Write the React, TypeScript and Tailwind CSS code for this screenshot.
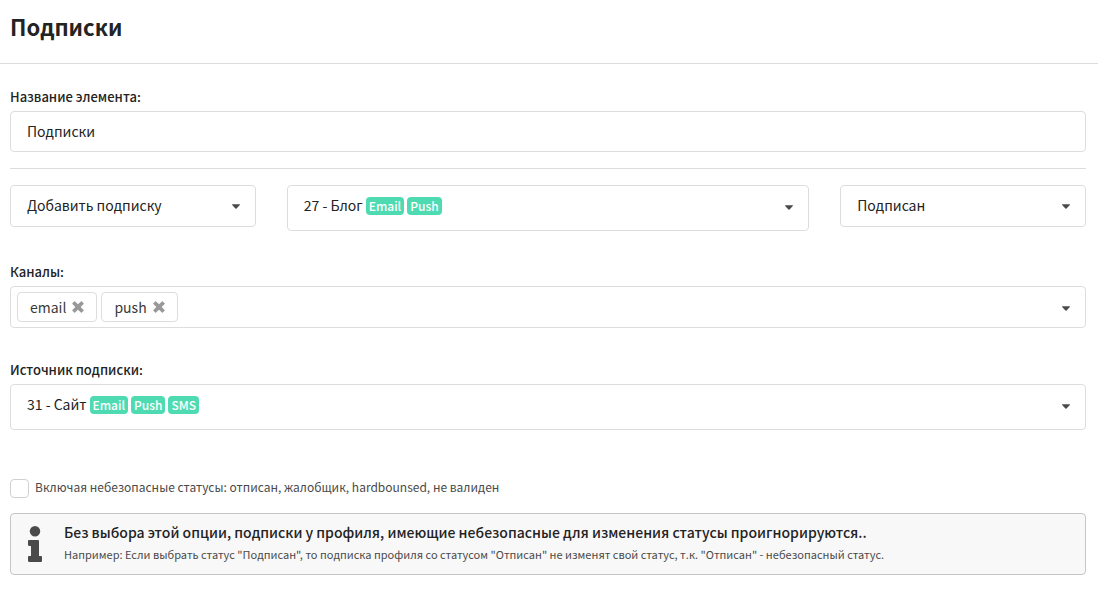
import { useId, useState } from 'react';
import type { ReactNode } from 'react';

const FIELD = 'w-full rounded border border-[#dcdddd] bg-white text-left text-[#232323]';

function Caret() {
  return (
    <svg viewBox="0 0 10 6" className="h-[5px] w-2 shrink-0 fill-[#4a4a4a]" aria-hidden="true">
      <path d="M0.6 0.2h8.8c.5 0 .7.5.4.9L5.7 5.6c-.4.4-1 .4-1.4 0L.2 1.1C-.1.7.1.2.6.2z" />
    </svg>
  );
}

function Badge({ children }: { children: ReactNode }) {
  return (
    <span className="rounded bg-[#4fdbb1] px-[3px] text-xs leading-[18px] font-medium text-white">
      {children}
    </span>
  );
}

function PlainSelect({ label, options }: { label: string; options: string[] }) {
  return (
    <div className="relative">
      <select
        aria-label={label}
        className={`${FIELD} block h-[42px] appearance-none pr-10 pb-[2px] pl-4 text-sm leading-5`}
      >
        {options.map((option) => (
          <option key={option}>{option}</option>
        ))}
      </select>
      <span className="pointer-events-none absolute inset-y-0 right-4 flex items-center">
        <Caret />
      </span>
    </div>
  );
}

function BadgeSelect({ id, label, value, badges }: { id?: string; label: string; value: string; badges: string[] }) {
  return (
    <button
      id={id}
      type="button"
      aria-label={label}
      aria-haspopup="listbox"
      className={`${FIELD} flex h-[46px] items-center justify-between pr-[15px] pb-[2px] pl-4 text-sm leading-5`}
    >
      <span className="flex items-center gap-[3px] pb-[2px]">
        <span className="pb-[2px]">{value}</span>
        {badges.map((badge) => (
          <Badge key={badge}>{badge}</Badge>
        ))}
      </span>
      <Caret />
    </button>
  );
}

function Label({ htmlFor, children }: { htmlFor: string; children: ReactNode }) {
  return (
    <label htmlFor={htmlFor} className="mb-1 block text-[13px] leading-5 font-medium text-[#232323]">
      {children}
    </label>
  );
}

export default function App() {
  const id = useId();
  const [name, setName] = useState('Подписки');
  const [channels, setChannels] = useState(['email', 'push']);
  const [unsafe, setUnsafe] = useState(false);

  return (
    <div className="bg-white font-['Noto_Sans_CJK_SC',sans-serif] text-[#232323]">
      <header className="border-b border-[#dcdddd] pt-[10px] pr-3 pb-[21px] pl-[10px]">
        <h1 className="text-[22px] leading-8 font-bold">Подписки</h1>
      </header>

      <main className="pt-[23px] pr-3 pb-4 pl-[10px]">
        <Label htmlFor={`${id}-name`}>Название элемента:</Label>
        <input
          id={`${id}-name`}
          value={name}
          onChange={(event) => setName(event.target.value)}
          className={`${FIELD} block h-[41px] px-4 pb-[2px] text-sm leading-5`}
        />

        <hr className="my-4 border-[#dcdddd]" />

        <div className="grid grid-cols-4 items-start gap-[31px]">
          <PlainSelect label="Действие" options={['Добавить подписку', 'Удалить подписку']} />
          <div className="col-span-2">
            <BadgeSelect label="Подписка" value="27 - Блог" badges={['Email', 'Push']} />
          </div>
          <PlainSelect label="Статус" options={['Подписан', 'Отписан']} />
        </div>

        <div className="mt-[31px]">
          <Label htmlFor={`${id}-channels`}>Каналы:</Label>
          <div className={`${FIELD} flex h-[42px] items-center gap-1 pr-[15px] pl-[6px]`}>
            {channels.map((channel) => (
              <span
                key={channel}
                className="flex h-[30px] items-center gap-[6px] rounded border border-[#dcdddd] px-3 text-sm leading-5 text-[#3a3a3a]"
              >
                {channel}
                <button
                  type="button"
                  aria-label={`Удалить ${channel}`}
                  onClick={() => setChannels(channels.filter((item) => item !== channel))}
                >
                  <svg viewBox="0 0 12 12" className="size-3 fill-[#999999]" aria-hidden="true">
                    <path d="M3.1.4 6 3.3 8.9.4c.3-.3.6-.3.9 0l1.8 1.8c.3.3.3.6 0 .9L8.7 6l2.9 2.9c.3.3.3.6 0 .9l-1.8 1.8c-.3.3-.6.3-.9 0L6 8.7l-2.9 2.9c-.3.3-.6.3-.9 0L.4 9.8c-.3-.3-.3-.6 0-.9L3.3 6 .4 3.1c-.3-.3-.3-.6 0-.9L2.2.4c.3-.3.6-.3.9 0z" />
                  </svg>
                </button>
              </span>
            ))}
            <button
              id={`${id}-channels`}
              type="button"
              aria-label="Каналы"
              aria-haspopup="listbox"
              className="flex h-full flex-1 items-center justify-end pt-[2px]"
            >
              <Caret />
            </button>
          </div>
        </div>

        <div className="mt-8">
          <Label htmlFor={`${id}-source`}>Источник подписки:</Label>
          <BadgeSelect
            id={`${id}-source`}
            label="Источник подписки"
            value="31 - Сайт"
            badges={['Email', 'Push', 'SMS']}
          />
        </div>

        <label className="mt-[49px] flex items-start gap-[6px] text-xs leading-4 text-[#4a4a4a]">
          <input
            type="checkbox"
            checked={unsafe}
            onChange={(event) => setUnsafe(event.target.checked)}
            className="size-[19px] shrink-0 appearance-none rounded border border-[#d0d1d1] bg-white checked:bg-[#4fdbb1]"
          />
          Включая небезопасные статусы: отписан, жалобщик, hardbounsed, не валиден
        </label>

        <section className="mt-[15px] flex items-center gap-[22px] rounded border border-[#c4c5c5] bg-[#f8f8f8] py-2 pr-4 pl-[17px]">
          <svg viewBox="0 0 14 36" className="h-9 w-[14px] shrink-0 fill-[#4a4a4a]" aria-hidden="true">
            <circle cx="7" cy="5.2" r="5.2" />
            <path d="M1.2 14h8.6c.8 0 1.2.5 1.2 1.2V30h1.8c.8 0 1.2.5 1.2 1.2v3.6c0 .8-.5 1.2-1.2 1.2H1.2C.4 36 0 35.5 0 34.8v-3.6C0 30.4.4 30 1.2 30H3V20H1.2C.4 20 0 19.5 0 18.8v-3.6C0 14.4.4 14 1.2 14z" />
          </svg>
          <div className="flex flex-col gap-[2px] pb-[2px]">
            <p className="text-sm leading-5 font-medium">
              Без выбора этой опции, подписки у профиля, имеющие небезопасные для изменения статусы проигнорируются..
            </p>
            <p className="text-[11px] leading-5 text-[#4a4a4a]">
              Например: Если выбрать статус "Подписан", то подписка профиля со статусом "Отписан" не изменят свой статус, т.к. "Отписан" - небезопасный статус.
            </p>
          </div>
        </section>
      </main>
    </div>
  );
}
